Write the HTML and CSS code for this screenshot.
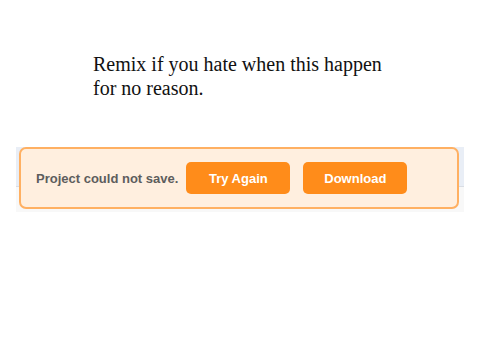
FILE: index.html
```html
<!DOCTYPE html>
<html>
<head>
<meta charset="utf-8">
<link rel="stylesheet" href="styles.css">
</head>
<body>
<p class="note">Remix if you hate when this happen<br>for no reason.</p>
<div class="band">
  <div class="alert">
    <span class="msg">Project could not save.</span>
    <button class="btn">Try Again</button>
    <button class="btn">Download</button>
  </div>
</div>
</body>
</html>
```
FILE: styles.css
```css
html, body { margin: 0; padding: 0; background: #fff; }
.note {
  margin: 0;
  padding: 52px 0 0 93px;
  font-family: "Liberation Serif", serif;
  font-size: 20px;
  line-height: 24px;
  color: #111;
}
.band {
  margin: 47px 0 0 16px;
  width: 448px;
  height: 65px;
  background: linear-gradient(#e9eef6 0, #e9eef6 39px, #d9dde4 39px, #d9dde4 40px, #f8f8f8 40px);
  position: relative;
}
.alert {
  position: absolute;
  left: 3px;
  top: 0;
  width: 440px;
  height: 62px;
  box-sizing: border-box;
  background: #ffefdf;
  border: 2px solid #ffb062;
  border-radius: 7px;
  display: flex;
  align-items: center;
  padding: 0 0 0 15px;
}
.msg {
  font-family: "Liberation Sans", Arial, sans-serif;
  font-weight: bold;
  font-size: 13px;
  color: #5d5d5d;
  margin-right: 8px;
}
.btn {
  width: 104px;
  height: 32px;
  border: none;
  border-radius: 5px;
  background: #ff8c1a;
  color: #fff;
  font-family: "Liberation Sans", Arial, sans-serif;
  font-weight: bold;
  font-size: 13px;
  margin-right: 13px;
  padding: 0;
}
```
